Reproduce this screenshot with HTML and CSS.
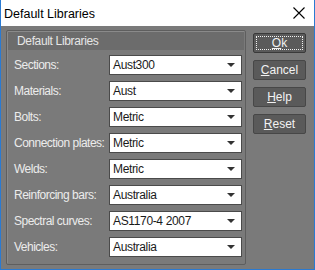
FILE: index.html
```html
<!DOCTYPE html>
<html>
<head>
<link rel="stylesheet" href="styles.css">
<title>Default Libraries</title>
</head>
<body>
<div class="window">
	<div class="titlebar">
		<span class="title">Default Libraries</span>
		<svg class="close" width="12" height="12" viewBox="0 0 12 12"><path d="M0.5 0.5 L11.5 11.5 M11.5 0.5 L0.5 11.5" stroke="#000" stroke-width="1.1" fill="none"/></svg>
	</div>
	<div class="client">
		<div class="group">
			<div class="group-head">Default Libraries</div>
			<div class="rows">
				<div class="row"><span class="label">Sections:</span><div class="combo"><span>Aust300</span><i class="arrow"></i></div></div>
				<div class="row"><span class="label">Materials:</span><div class="combo"><span>Aust</span><i class="arrow"></i></div></div>
				<div class="row"><span class="label">Bolts:</span><div class="combo"><span>Metric</span><i class="arrow"></i></div></div>
				<div class="row"><span class="label">Connection plates:</span><div class="combo"><span>Metric</span><i class="arrow"></i></div></div>
				<div class="row"><span class="label">Welds:</span><div class="combo"><span>Metric</span><i class="arrow"></i></div></div>
				<div class="row"><span class="label">Reinforcing bars:</span><div class="combo"><span>Australia</span><i class="arrow"></i></div></div>
				<div class="row"><span class="label">Spectral curves:</span><div class="combo"><span>AS1170-4 2007</span><i class="arrow"></i></div></div>
				<div class="row"><span class="label">Vehicles:</span><div class="combo"><span>Australia</span><i class="arrow"></i></div></div>
			</div>
		</div>
		<div class="buttons">
			<button type="button" class="btn default"><span class="focus"><u>O</u>k</span></button>
			<button type="button" class="btn"><u>C</u>ancel</button>
			<button type="button" class="btn"><u>H</u>elp</button>
			<button type="button" class="btn"><u>R</u>eset</button>
		</div>
	</div>
</div>
</body>
</html>
```
FILE: styles.css
```css
body {
	margin: 0;
	font-family: "Liberation Sans", Arial, sans-serif;
	font-size: 12px;
	letter-spacing: -0.35px;
}
div.window {
	width: 315px;
	height: 270px;
	box-sizing: border-box;
	border: 1px solid #2a7ad2;
	border-top: 0;
	display: flex;
	flex-direction: column;
	background-color: #7a7a7a;
}
div.titlebar {
	height: 26px;
	background-color: #fff;
	display: flex;
	align-items: center;
	justify-content: space-between;
	padding: 0 9px 0 3px;
	flex: none;
}
span.title {
	color: #000;
	font-size: 12.5px;
	letter-spacing: 0;
	padding-top: 1px;
}
div.client {
	flex: 1;
	display: flex;
	padding: 4px 0 0 5px;
	gap: 7px;
}
div.group {
	width: 240px;
	height: 235px;
	box-sizing: border-box;
	border: 1px solid #5e5e5e;
	border-radius: 2px;
	box-shadow: inset 1px 1px 0 #8a8a8a;
}
div.group-head {
	height: 18px;
	line-height: 18px;
	background-color: #6c6c6c;
	color: #e6e6e6;
	padding-left: 9px;
	margin: 1px 1px 0 1px;
}
div.rows {
	display: flex;
	flex-direction: column;
	gap: 6px;
	padding: 5px 0 0 7px;
}
div.row {
	display: flex;
	align-items: center;
	height: 20px;
}
span.label {
	width: 95px;
	flex: none;
	white-space: nowrap;
	letter-spacing: -0.5px;
	color: #ececec;
}
div.combo {
	width: 133px;
	height: 20px;
	box-sizing: border-box;
	background-color: #fff;
	border: 1px solid #4a4a4a;
	display: flex;
	align-items: center;
	justify-content: space-between;
	padding: 0 6px 0 3px;
	color: #1a1a1a;
}
i.arrow {
	width: 0;
	height: 0;
	border-left: 4px solid transparent;
	border-right: 4px solid transparent;
	border-top: 4px solid #333;
}
div.buttons {
	display: flex;
	flex-direction: column;
	gap: 7px;
	padding-top: 3px;
}
button.btn {
	width: 53px;
	height: 20px;
	box-sizing: border-box;
	background-color: #5a5a5a;
	border: 1px solid #474747;
	border-radius: 2px;
	color: #f2f2f2;
	font-family: "Liberation Sans", Arial, sans-serif;
	font-size: 12px;
	letter-spacing: 0;
	padding: 0;
	display: flex;
	align-items: center;
	justify-content: center;
}
button.default {
	border: 1px solid #3a3a3a;
	padding: 2px;
}
span.focus {
	flex: 1;
	align-self: stretch;
	border: 1px dotted #f2f2f2;
	display: flex;
	align-items: center;
	justify-content: center;
}
```
